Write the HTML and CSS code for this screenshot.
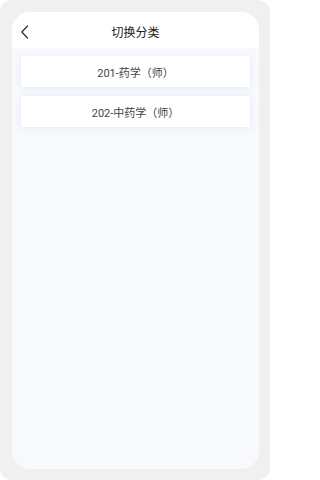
FILE: index.html
```html
<!DOCTYPE html>
<html lang="zh">
<head>
<meta charset="utf-8">
<link rel="stylesheet" href="styles.css">
</head>
<body>
<div class="frame">
  <div class="phone">
    <header class="nav">
      <span class="back">
        <svg width="9" height="14" viewBox="0 0 9 14"><path d="M7.5 1 L1.8 7 L7.5 13" fill="none" stroke="#333" stroke-width="1.3" stroke-linecap="round" stroke-linejoin="round"/></svg>
      </span>
      <h1 class="title">切换分类</h1>
    </header>
    <main class="list">
      <div class="item">201-药学（师）</div>
      <div class="item">202-中药学（师）</div>
    </main>
  </div>
</div>
</body>
</html>
```
FILE: styles.css
```css
html, body {
  margin: 0;
  padding: 0;
  background: #ffffff;
}
body {
  font-family: Roboto, "Noto Sans CJK SC", sans-serif;
}
.frame {
  width: 270px;
  height: 480px;
  box-sizing: border-box;
  padding: 12px 11px 11px 12px;
  background: #f0f0f0;
  border-radius: 12px;
  display: flex;
}
.phone {
  flex: 1;
  background: #f8f9fd;
  border-radius: 18px;
  overflow: hidden;
  display: flex;
  flex-direction: column;
}
.nav {
  height: 36px;
  background: #ffffff;
  position: relative;
  display: flex;
  align-items: center;
  justify-content: center;
  padding-top: 6px;
  box-sizing: border-box;
}
.back {
  position: absolute;
  left: 8px;
  top: 13px;
  display: flex;
}
.title {
  margin: 0;
  font-size: 12px;
  font-weight: 400;
  color: #222;
  line-height: 20px;
}
.list {
  display: flex;
  flex-direction: column;
  gap: 9px;
  padding: 8px 9px;
}
.item {
  height: 31px;
  background: #ffffff;
  box-shadow: 0 1px 6px rgba(200, 215, 245, 0.45);
  display: flex;
  align-items: center;
  justify-content: center;
  font-size: 11px;
  color: #444;
}
```
